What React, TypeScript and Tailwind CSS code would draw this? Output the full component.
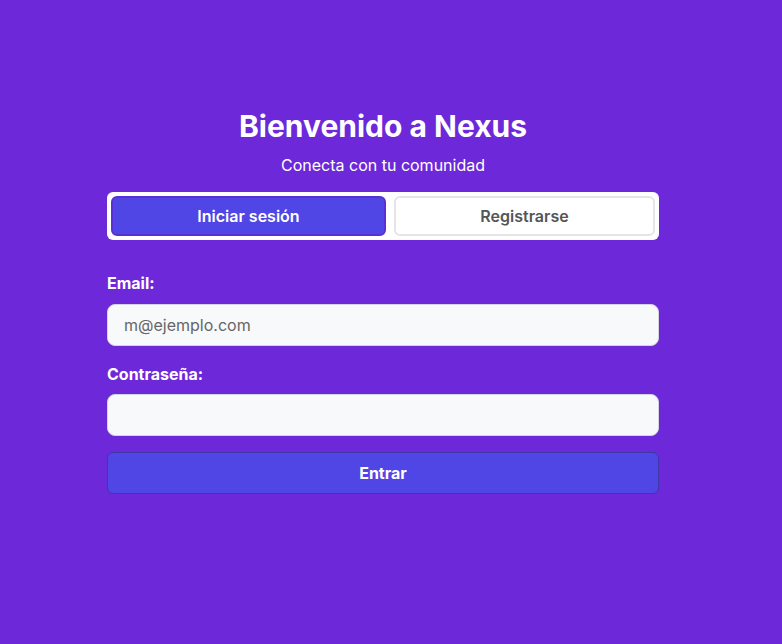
import { useState } from "react";

export default function App() {
    const [tab, setTab] = useState<"login" | "register">("login");

    return (
        <div className="min-h-screen bg-[#6d28d9] flex justify-center pr-4 pt-[108px] font-['Inter',sans-serif]">
            <div className="w-[552px] flex flex-col">
                <h1 className="text-3xl font-bold text-white text-center">Bienvenido a Nexus</h1>
                <p className="mt-[9px] text-base text-white text-center">Conecta con tu comunidad</p>

                <div className="mt-[15px] bg-white rounded-md p-1 flex gap-2">
                    <button
                        onClick={() => setTab("login")}
                        className={
                            tab === "login"
                                ? "flex-auto py-[6px] rounded-md border-2 border-[#5b2fd6] bg-[#4f46e5] text-white font-semibold text-base"
                                : "flex-auto py-[6px] rounded-md border-2 border-[#e5e5e5] bg-white text-[#555] font-semibold text-base"
                        }
                    >
                        Iniciar sesión
                    </button>
                    <button
                        onClick={() => setTab("register")}
                        className={
                            tab === "register"
                                ? "flex-auto py-[6px] rounded-md border-2 border-[#5b2fd6] bg-[#4f46e5] text-white font-semibold text-base"
                                : "flex-auto py-[6px] rounded-md border-2 border-[#e5e5e5] bg-white text-[#555] font-semibold text-base"
                        }
                    >
                        Registrarse
                    </button>
                </div>

                <form className="mt-[31px] flex flex-col" onSubmit={(e) => e.preventDefault()}>
                    <label className="text-base font-bold text-white mb-[9px]">Email:</label>
                    <input
                        type="email"
                        placeholder="m@ejemplo.com"
                        className="w-full px-4 py-2 text-base rounded-lg border border-[#d4d4e0] bg-[#f7f9fb] text-gray-800 placeholder:text-[#666] outline-none"
                    />

                    <label className="mt-4 text-base font-bold text-white mb-2">Contraseña:</label>
                    <input
                        type="password"
                        className="w-full px-4 py-2 text-base rounded-lg border border-[#d4d4e0] bg-[#f7f9fb] text-gray-800 outline-none"
                    />

                    <button
                        type="submit"
                        className="mt-4 w-full py-2 rounded-md border border-[#3f36a8] bg-[#4f46e5] text-white font-bold text-base"
                    >
                        Entrar
                    </button>
                </form>
            </div>
        </div>
    );
}
